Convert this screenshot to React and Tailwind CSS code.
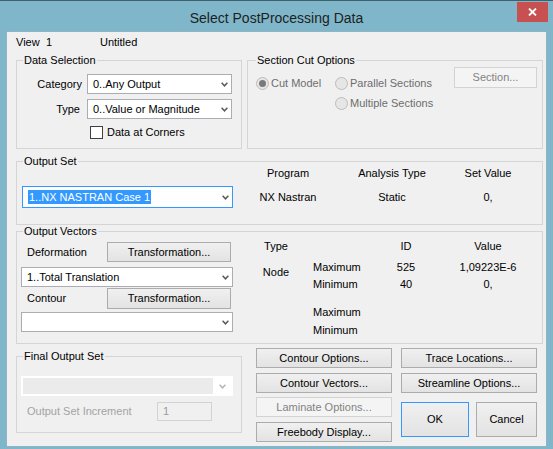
import React from 'react';

const font = { fontFamily: '"Liberation Sans", Arial, sans-serif' };

const Chevron = ({ color = '#5a5a5a' }) => (
  <svg width="7" height="5" viewBox="0 0 7 5" className="shrink-0">
    <path d="M0.6 0.8 L3.5 3.8 L6.4 0.8" fill="none" stroke={color} strokeWidth="1.5" />
  </svg>
);

const Group = ({ label, className = '', labelClass = 'left-[6px]', children }) => (
  <div className={`relative border border-[#d5d5d5] ${className}`}>
    <span className={`absolute -top-[7px] ${labelClass} bg-[#f0f0f0] px-[1px] leading-[13px] text-black`}>{label}</span>
    {children}
  </div>
);

const Select = ({ value, className = 'w-[145px]' }) => (
  <div className={`flex h-[20px] items-center justify-between border border-[#abadb3] bg-white pl-[5px] pr-[3px] ${className}`}>
    <span className="leading-[13px] text-black">{value}</span>
    <Chevron />
  </div>
);

const Btn = ({ children, className = '', disabled = false }) => (
  <div
    className={`flex items-center justify-center border leading-[13px] ${
      disabled
        ? 'border-[#d3d3d3] bg-[#f4f4f4] text-[#838383]'
        : 'border-[#acacac] bg-linear-to-b from-[#f0f0f0] to-[#e3e3e3] text-black'
    } ${className}`}
  >
    {children}
  </div>
);

const Radio = ({ label, checked }) => (
  <div className="flex h-[20px] items-center gap-[2px]">
    <span className="flex h-[13px] w-[13px] items-center justify-center rounded-full border border-[#bcbcbc] bg-[#e6e6e6]">
      {checked && <span className="h-[7px] w-[7px] rounded-full bg-[#7a7a7a]" />}
    </span>
    <span className="leading-[13px] text-[#6d6d6d]">{label}</span>
  </div>
);

export default function App() {
  return (
    <div style={font} className="flex h-[449px] w-[553px] flex-col border-t border-[#40606c] bg-[#7fb6ca] text-[11px]">
      {/* title bar */}
      <div className="flex h-[30px] items-start">
        <div className="w-[36px]" />
        <div className="mt-[9px] flex-1 text-center text-[14px] leading-[16px] text-[#1e1e1e]">Select PostProcessing Data</div>
        <div className="mr-[5px] mt-[1px] flex h-[20px] w-[31px] items-center justify-center bg-[#c75050]">
          <svg width="9" height="8" viewBox="0 0 9 8">
            <path d="M1 0.5 L8 7.5 M8 0.5 L1 7.5" stroke="white" strokeWidth="1.8" />
          </svg>
        </div>
      </div>

      {/* client */}
      <div className="mx-[6px] h-[416px] border border-[#8fb5c4] bg-[#f0f0f0] pl-[9px]">
        <div className="flex h-[21px] items-center leading-[13px] text-black">
          <span className="w-[30px]">View</span>
          <span className="w-[54px]">1</span>
          <span>Untitled</span>
        </div>

        {/* row 1 */}
        <div className="mt-[7px] flex gap-[5px]">
          <Group label="Data Selection" className="h-[89px] w-[226px]">
            <div className="grid grid-cols-[65px_145px] gap-x-[5px] gap-y-[5px] pt-[13px]">
              <div className="flex h-[20px] items-center justify-end leading-[13px]">Category</div>
              <Select value="0..Any Output" />
              <div className="flex h-[20px] items-center justify-end pr-[2px] leading-[13px]">Type</div>
              <Select value="0..Value or Magnitude" />
            </div>
            <div className="mt-[7px] flex items-center gap-[4px] pl-[73px]">
              <span className="h-[13px] w-[13px] border border-[#404040] bg-white" />
              <span className="leading-[13px]">Data at Corners</span>
            </div>
          </Group>

          <Group label="Section Cut Options" labelClass="left-[8px]" className="h-[89px] w-[296px]">
            <div className="flex items-start pl-[8px] pr-[5px] pt-[6px]">
              <div className="mt-[6px] grid grid-cols-[79px_auto]">
                <Radio label="Cut Model" checked />
                <Radio label="Parallel Sections" />
                <div />
                <Radio label="Multiple Sections" />
              </div>
              <Btn disabled className="ml-auto h-[21px] w-[83px]">Section...</Btn>
            </div>
          </Group>
        </div>

        {/* output set */}
        <Group label="Output Set" className="mt-[12px] h-[64px] w-[527px]">
          <div className="flex items-start pl-[5px] pt-[5px]">
            <div className="mt-[19px] flex h-[22px] w-[211px] items-center justify-between border border-[#3399ff] bg-white pl-[5px] pr-[3px]">
              <span className="bg-[#3399ff] px-[1px] leading-[14px] text-white">1..NX NASTRAN Case 1</span>
              <Chevron />
            </div>
            {[
              ['Program', 'NX Nastran', 'w-[110px]'],
              ['Analysis Type', 'Static', 'w-[98px]'],
              ['Set Value', '0,', 'w-[94px]'],
            ].map(([h, v, w]) => (
              <div key={h} className={`flex flex-col text-center leading-[13px] ${w}`}>
                <span className="h-[13px]">{h}</span>
                <span className="mt-[11px] h-[13px]">{v}</span>
              </div>
            ))}
          </div>
        </Group>

        {/* output vectors */}
        <Group label="Output Vectors" className="mt-[6px] h-[113px] w-[527px]">
          <div className="flex items-start pl-[4px]">
            <div className="flex w-[212px] flex-col pt-[10px]">
              <div className="flex h-[20px] items-center justify-between">
                <span className="ml-[6px] leading-[13px]">Deformation</span>
                <Btn className="mr-[2px] h-[20px] w-[124px]">Transformation...</Btn>
              </div>
              <Select value="1..Total Translation" className="mt-[5px] w-[212px]" />
              <div className="mt-[1px] flex h-[21px] items-center justify-between">
                <span className="ml-[6px] leading-[13px]">Contour</span>
                <Btn className="mr-[2px] h-[21px] w-[124px]">Transformation...</Btn>
              </div>
              <Select value="" className="mt-[3px] w-[212px]" />
            </div>

            <div className="ml-[18px] flex flex-col pt-[8px] leading-[13px]">
              <div className="grid h-[13px] grid-cols-[50px_70px_70px_94px] text-center">
                <span>Type</span>
                <span />
                <span>ID</span>
                <span>Value</span>
              </div>
              <div className="mt-[6px] grid grid-cols-[50px_70px_70px_94px] grid-rows-[17px_17px]">
                <span className="row-span-2 pt-[7px] text-center">Node</span>
                <span className="flex items-center pl-[12px]">Maximum</span>
                <span className="flex items-center justify-center">525</span>
                <span className="flex items-center justify-center">1,09223E-6</span>
                <span className="flex items-center pl-[12px]">Minimum</span>
                <span className="flex items-center justify-center">40</span>
                <span className="flex items-center justify-center">0,</span>
              </div>
              <div className="mt-[10px] grid grid-cols-[50px_70px_70px_94px] grid-rows-[18px_18px]">
                <span className="row-span-2" />
                <span className="flex items-center pl-[12px]">Maximum</span>
                <span className="col-span-2" />
                <span className="flex items-center pl-[12px]">Minimum</span>
                <span className="col-span-2" />
              </div>
            </div>
          </div>
        </Group>

        {/* bottom */}
        <div className="mt-[4px] flex items-start">
          <Group label="Final Output Set" className="mt-[8px] h-[77px] w-[226px]">
            <div className="flex flex-col pl-[4px] pt-[19px]">
              <div className="flex h-[20px] w-[212px] border-2 border-white bg-white">
                <div className="flex-1 bg-[#ebebeb]" />
                <div className="flex w-[18px] items-center justify-center">
                  <Chevron color="#b5b5b5" />
                </div>
              </div>
              <div className="mt-[6px] flex h-[19px] items-center">
                <span className="ml-[6px] w-[130px] leading-[13px] text-[#a3a3a3]">Output Set Increment</span>
                <div className="flex h-[19px] w-[55px] items-center border border-[#d3d3d3] pl-[5px] leading-[13px] text-[#9a9a9a]">1</div>
              </div>
            </div>
          </Group>

          <div className="ml-[14px] flex gap-[9px]">
            <div className="flex w-[136px] flex-col">
              <Btn className="h-[20px]">Contour Options...</Btn>
              <Btn className="mt-[5px] h-[20px]">Contour Vectors...</Btn>
              <Btn disabled className="mt-[4px] h-[20px]">Laminate Options...</Btn>
              <Btn className="mt-[5px] h-[20px]">Freebody Display...</Btn>
            </div>
            <div className="flex w-[136px] flex-col">
              <Btn className="h-[20px]">Trace Locations...</Btn>
              <Btn className="mt-[5px] h-[20px]">Streamline Options...</Btn>
              <div className="mt-[9px] flex gap-[7px]">
                <Btn className="h-[35px] w-[68px] !border-[#3399ff]">OK</Btn>
                <Btn className="h-[35px] w-[61px]">Cancel</Btn>
              </div>
            </div>
          </div>
        </div>
      </div>
    </div>
  );
}
